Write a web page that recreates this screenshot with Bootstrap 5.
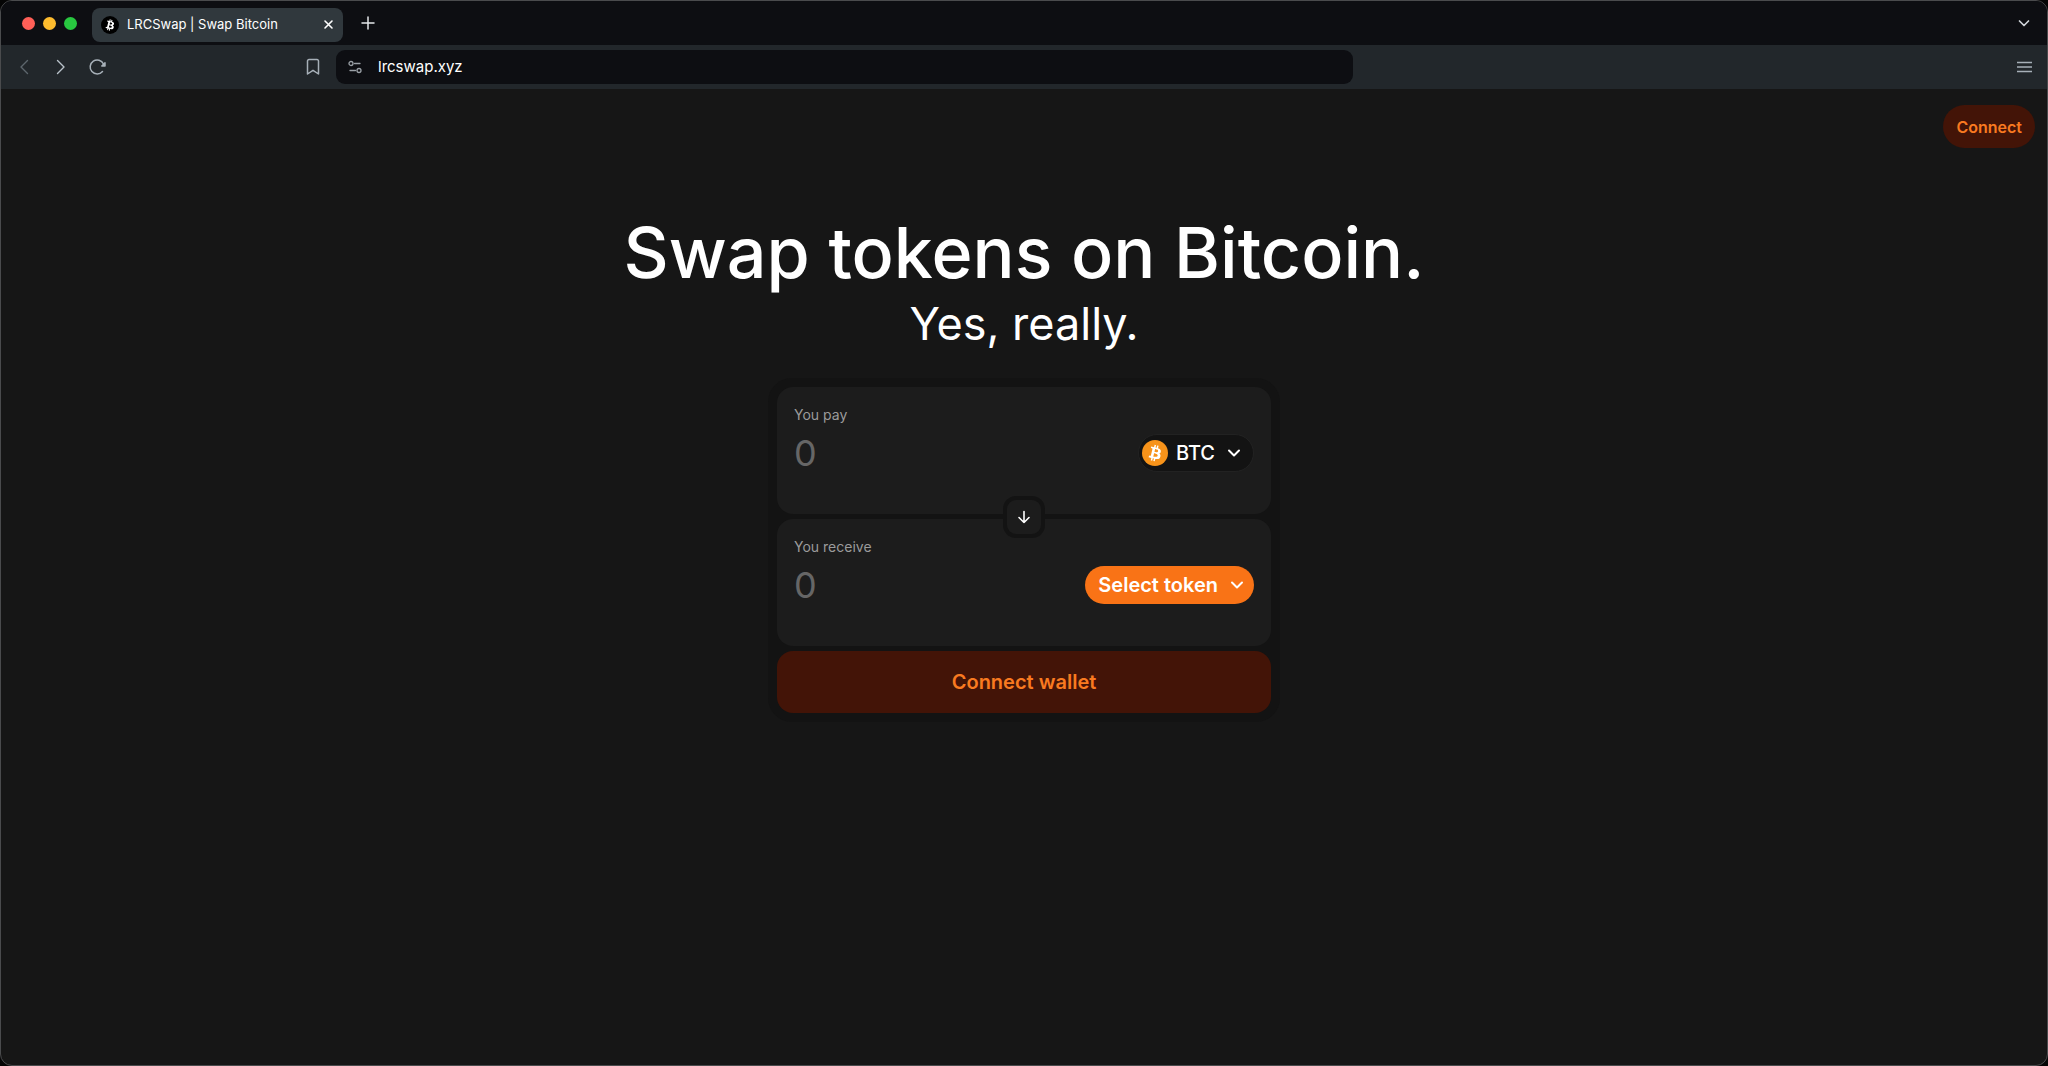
<!DOCTYPE html>
<html lang="en" data-bs-theme="dark">
<head>
<meta charset="utf-8">
<meta name="viewport" content="width=device-width, initial-scale=1">
<title>LRCSwap | Swap Bitcoin</title>
<link href="https://cdn.jsdelivr.net/npm/bootstrap@5.3.0/dist/css/bootstrap.min.css" rel="stylesheet">
<style>
  body { font-family: Inter, "Liberation Sans", sans-serif; background: #050505; }
  svg { display: block; flex: none; }
  button { color: inherit; }
  .app-window { border: 1px solid #4a4b4d; border-radius: 12px; background: #161616; overflow: hidden; }
  .tab-strip { background: #0d0e12; height: 44px; padding: 0 16px 0 21px; }
  .light { width: 13px; height: 13px; border-radius: 50%; }
  .light-close { background: #ff5f57; }
  .light-min { background: #febc2e; }
  .light-max { background: #28c840; }
  .tab-item { background: #30383d; width: 251px; height: 34px; border-radius: 8px; padding: 0 9px; margin: 3px 0 0 15px; font-size: 13px; font-weight: 400; color: #fff; }
  .icon-btn { background: none; border: 0; padding: 0; }
  .tool-bar { background: #22272b; height: 44px; padding: 0 15px; color: #a7b0b8; }
  .nav-set { width: 304px; }
  .url-box { background: #0d0e12; width: 1017px; height: 34px; border-radius: 9px; padding: 0 12px; }
  .url-box input { background: none; border: 0; outline: 0; padding: 0; color: #fff; font-size: 15px; font-weight: 400; line-height: 20px; }
  .site-head { padding: 16px 12px 0; }
  .btn-ember { --bs-btn-color: #f97a20; --bs-btn-bg: #431407; --bs-btn-hover-color: #f97a20; --bs-btn-hover-bg: #52190a; --bs-btn-border-width: 0; font-weight: 600; }
  .btn-connect { height: 43px; padding: 0 13px; font-size: 16px; }
  .headline { margin: 60px 0 0; font-size: 70px; line-height: 90px; font-weight: 500; color: #fff; }
  .tagline { margin: 0; font-size: 45px; line-height: 52px; font-weight: 400; color: #fff; }
  .swap-box { width: 512px; max-width: 100%; padding: 9px; margin: 28px auto 0; border-radius: 24px; background: #131313; }
  .side-panel { background: #1c1c1c; border-radius: 16px; min-height: 127px; padding: 18px 17px; }
  .side-panel label { font-size: 14px; line-height: 20px; color: #9b9b9b; margin-bottom: 9px; }
  .amount { background: none; border: 0; outline: 0; padding: 0; height: 38px; font-size: 36px; min-width: 0; color: #fff; }
  .amount::placeholder { color: #666; opacity: 1; }
  .token-btn { height: 38px; font-size: 20px; line-height: 24px; border-radius: 19px; color: #fff; white-space: nowrap; }
  .token-btc { background: #131313; border: 1px solid #222; padding: 0 12px 0 3px; font-weight: 500; }
  .token-pick { background: #f97316; border: 0; padding: 0 10px 0 13px; font-weight: 600; }
  .flip-seam { height: 5px; }
  .flip-btn { width: 42px; height: 42px; background: #1c1c1c; border: 4px solid #131313; border-radius: 13px; padding: 0; color: #fff; }
  .btn-wallet { height: 62px; border-radius: 16px; font-size: 20px; margin-top: 5px; }
</style>
<script src="https://cdn.jsdelivr.net/npm/bootstrap@5.3.0/dist/js/bootstrap.bundle.min.js" defer></script>
</head>
<body>
<svg width="0" height="0" class="position-absolute" aria-hidden="true">
  <symbol id="coin-sign" viewBox="0 0 32 32">
    <path fill-rule="evenodd" d="M23.2 14c.3-2.100-1.300-3.300-3.500-4l.7-2.900-1.700-.4-.7 2.800-1.400-.3.7-2.800-1.700-.5-.8 2.900-1.100-.3-2.400-.6-.4 1.900 1.200.3c.7.200.8.600.800 1l-2 8c-.1.200-.3.500-.8.400l-1.200-.3-.9 2 2.300.5 1.200.4-.7 2.900 1.700.4.800-2.900 1.400.3-.8 2.900 1.700.5.800-2.900c3 .5 5.200.3 6.100-2.400.8-2.100 0-3.400-1.500-4.200 1.100-.2 2-1 2.200-2.700zm-3.900 5.500c-.5 2.100-4.200 1-5.400.7l1-3.800c1.200.300 5 .900 4.400 3.100zm.5-5.600c-.5 1.900-3.500.900-4.500.7l.9-3.500c1 .3 4.200.700 3.600 2.800z"/>
  </symbol>
</svg>
<div class="app-window min-vh-100 d-flex flex-column">
  <header>
    <div class="tab-strip d-flex align-items-center">
      <div class="d-flex gap-2">
        <span class="light light-close"></span><span class="light light-min"></span><span class="light light-max"></span>
      </div>
      <div class="tab-item d-flex align-items-center">
        <svg width="18" height="18" viewBox="0 0 32 32" fill="#fff"><circle cx="16" cy="16" r="16" fill="#000"/><use href="#coin-sign" width="32" height="32"/></svg>
        <span class="flex-grow-1 text-truncate ms-2">LRCSwap | Swap Bitcoin</span>
        <button class="icon-btn" aria-label="Close tab"><svg width="11" height="11" viewBox="0 0 11 11" stroke="#fff" stroke-width="1.600" stroke-linecap="round"><path d="M2 2l7 7M9 2l-7 7"/></svg></button>
      </div>
      <button class="icon-btn ms-3" aria-label="New tab"><svg width="18" height="18" viewBox="0 0 18 18" stroke="#e4e7ea" stroke-width="1.500" stroke-linecap="round"><path d="M9 3v12M3 9h12"/></svg></button>
      <button class="icon-btn ms-auto" aria-label="Search tabs"><svg width="14" height="14" viewBox="0 0 14 14" fill="none" stroke="#cfd4d9" stroke-width="1.700" stroke-linecap="round" stroke-linejoin="round"><path d="M2.500 5L7 9.500 11.500 5"/></svg></button>
    </div>
    <div class="tool-bar d-flex align-items-center">
      <div class="nav-set d-flex align-items-center">
        <button class="icon-btn" aria-label="Back"><svg width="16" height="18" viewBox="0 0 16 18" fill="none" stroke="#5d666d" stroke-width="1.400" stroke-linecap="round" stroke-linejoin="round"><path d="M11.500 2.500L5 9l6.500 6.500"/></svg></button>
        <button class="icon-btn ms-3 ps-1" aria-label="Forward"><svg width="16" height="18" viewBox="0 0 16 18" fill="none" stroke="#b9c2ca" stroke-width="1.400" stroke-linecap="round" stroke-linejoin="round"><path d="M5.500 2.500L12 9l-6.500 6.500"/></svg></button>
        <button class="icon-btn ms-3 ps-1" aria-label="Reload"><svg width="20" height="18" viewBox="0 0 20 18" fill="none" stroke="#a7b0b8" stroke-width="1.500" stroke-linecap="round"><path d="M14.500 13.500a7 7 0 1 1 1-7.500"/><path d="M17 4.800v3.200h-3.200z" fill="#a7b0b8" stroke-linejoin="round"/></svg></button>
        <button class="icon-btn ms-auto" aria-label="Bookmark"><svg width="14" height="18" viewBox="0 0 14 18" fill="none" stroke="currentColor" stroke-width="1.500" stroke-linejoin="round"><path d="M1.500 3a1.500 1.500 0 0 1 1.500-1.500h8A1.500 1.500 0 0 1 12.500 3v13L7 12.300 1.500 16z"/></svg></button>
      </div>
      <div class="url-box d-flex align-items-center ms-3">
        <svg width="14" height="14" viewBox="0 0 14 14" fill="none" stroke="#9aa0a6" stroke-width="1.300" stroke-linecap="round"><circle cx="3" cy="3.500" r="2"/><path d="M6.500 3.500H12M2 10.500h5.500"/><circle cx="11" cy="10.500" r="2"/></svg>
        <input class="flex-grow-1 ms-3" type="text" value="lrcswap.xyz" aria-label="Address">
      </div>
      <button class="icon-btn ms-auto" aria-label="Menu"><svg width="15" height="12" viewBox="0 0 15 12" stroke="currentColor" stroke-width="1.300"><path d="M0 1.500h15M0 6h15M0 10.500h15"/></svg></button>
    </div>
  </header>

  <div class="site-head d-flex justify-content-end">
    <button class="btn btn-ember btn-connect rounded-pill">Connect</button>
  </div>

  <main class="text-center">
    <h1 class="headline">Swap tokens on Bitcoin.</h1>
    <p class="tagline">Yes, really.</p>

    <form class="swap-box d-flex flex-column text-start">
      <section class="side-panel">
        <label class="d-block" for="pay">You pay</label>
        <div class="d-flex align-items-center">
          <input class="amount flex-grow-1" id="pay" type="text" inputmode="decimal" placeholder="0">
          <button type="button" class="token-btn token-btc d-flex align-items-center">
            <svg width="26" height="26" viewBox="0 0 32 32" fill="#fff"><circle cx="16" cy="16" r="16" fill="#f7931a"/><use href="#coin-sign" width="32" height="32"/></svg>
            <span class="ms-2 me-2 pe-1">BTC</span>
            <svg width="14" height="14" viewBox="0 0 14 14" fill="none" stroke="#fff" stroke-width="2" stroke-linecap="round" stroke-linejoin="round"><path d="M2 4.500L7 9.500l5-5"/></svg>
          </button>
        </div>
      </section>
      <div class="flip-seam position-relative">
        <button type="button" class="flip-btn position-absolute top-50 start-50 translate-middle d-flex align-items-center justify-content-center" aria-label="Switch tokens">
          <svg width="14" height="14" viewBox="0 0 14 14" fill="none" stroke="currentColor" stroke-width="1.600" stroke-linecap="round" stroke-linejoin="round"><path d="M7 1.500v11M2 7.500l5 5 5-5"/></svg>
        </button>
      </div>
      <section class="side-panel">
        <label class="d-block" for="receive">You receive</label>
        <div class="d-flex align-items-center">
          <input class="amount flex-grow-1" id="receive" type="text" inputmode="decimal" placeholder="0">
          <button type="button" class="token-btn token-pick d-flex align-items-center">
            <span class="me-2 pe-1">Select token</span>
            <svg width="14" height="14" viewBox="0 0 14 14" fill="none" stroke="#fff" stroke-width="2" stroke-linecap="round" stroke-linejoin="round"><path d="M2 4.500L7 9.500l5-5"/></svg>
          </button>
        </div>
      </section>
      <button type="button" class="btn btn-ember btn-wallet">Connect wallet</button>
    </form>
  </main>
</div>
</body>
</html>
